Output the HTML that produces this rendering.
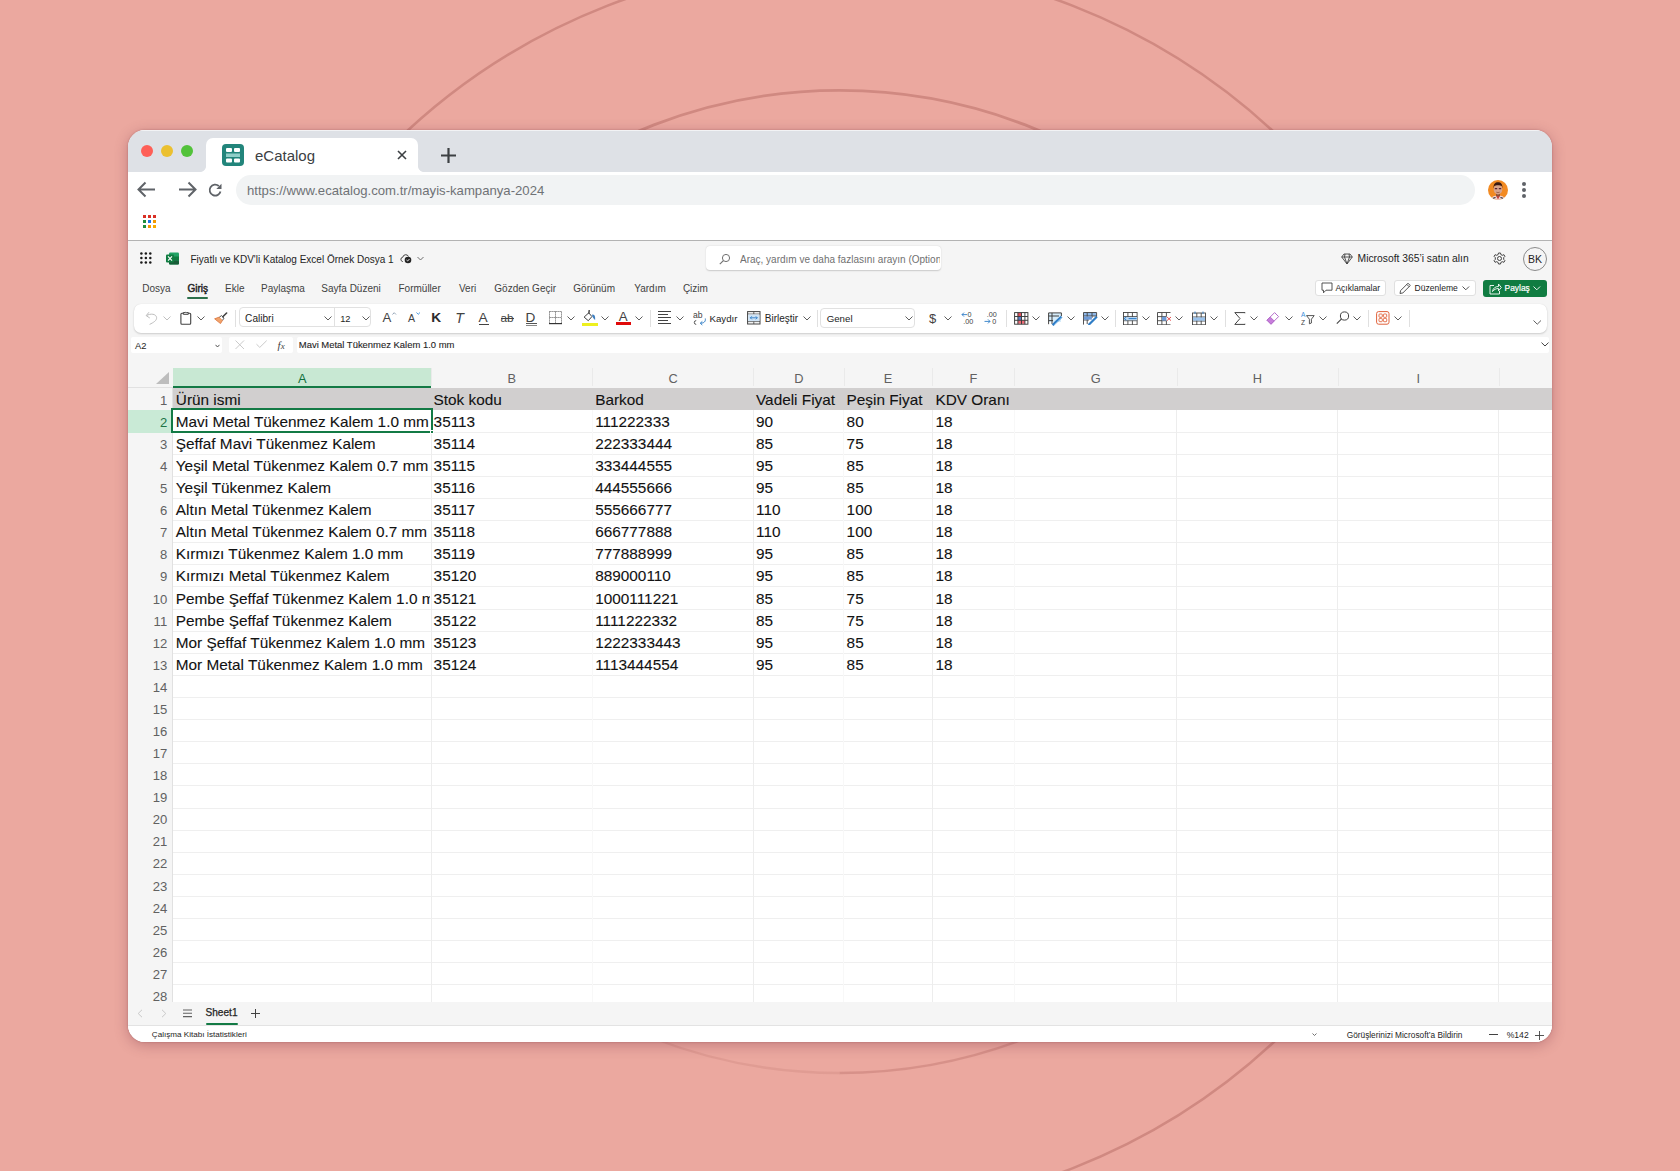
<!DOCTYPE html>
<html><head><meta charset="utf-8">
<style>
*{margin:0;padding:0;box-sizing:border-box}
html,body{width:1680px;height:1171px;overflow:hidden}
body{background:#EBA89F;font-family:"Liberation Sans",sans-serif;position:relative}
.abs{position:absolute}
#bg{position:absolute;left:0;top:0}
#win{position:absolute;left:128px;top:130px;width:1424px;height:912px;border-radius:17px;overflow:hidden;background:#F5F5F5;box-shadow:0 3px 14px rgba(110,40,60,0.33),0 0 2px rgba(100,40,50,0.35)}
#tabbar{position:absolute;left:0;top:0;width:1424px;height:42px;background:#DEE1E6}
.dot{position:absolute;top:15px;width:12px;height:12px;border-radius:50%}
#tab{position:absolute;left:78px;top:8px;width:212px;height:36px;background:#fff;border-radius:7px 7px 0 0}
.flare{position:absolute;top:36px;width:6px;height:6px}
#toolbar{position:absolute;left:0;top:42px;width:1424px;height:68px;background:#fff}
#sep{position:absolute;left:0;top:110px;width:1424px;height:1px;background:#B3B3B3}
#url{position:absolute;left:108px;top:3px;width:1239px;height:30px;border-radius:15px;background:#F1F3F4}
.t10{font-size:10px;white-space:nowrap;line-height:12px}
.btn{background:#fff;border:1px solid #E0E0E0;border-radius:3px}
</style></head>
<body>
<svg id="bg" width="1680" height="1171">
<path d="M840 1212 A633 625 0 1 0 207 587" fill="none" stroke="#D08981" stroke-width="2.6"/>
<path d="M335.1 581.7 A504.5 491.3 0 0 1 1344.1 581.7" fill="none" stroke="#D08981" stroke-width="2.8"/>
<path d="M1344.1 581.7 A504.5 491.3 0 0 1 839.6 1073" fill="none" stroke="#D08981" stroke-width="2.4" opacity="0.75"/>
<path d="M839.6 1073 A504.5 491.3 0 0 1 335.1 581.7" fill="none" stroke="#D08981" stroke-width="2.4" opacity="0.4"/>
</svg>
<div id="win">
 <div id="tabbar">
  <div id="tophl" class="abs" style="left:0;top:0;width:1424px;height:1px;background:rgba(255,255,255,0.6)"></div>
  <div class="dot" style="left:13px;background:#FE5F57"></div>
  <div class="dot" style="left:33px;background:#EBC030"></div>
  <div class="dot" style="left:53px;background:#52C23A"></div>
  <div class="flare" style="left:72px;background:radial-gradient(circle at 0 0,#DEE1E6 5.6px,#fff 6.4px)"></div><div class="flare" style="left:290px;background:radial-gradient(circle at 100% 0,#DEE1E6 5.6px,#fff 6.4px)"></div>
  <div id="tab">
   <svg class="abs" style="left:16px;top:6px" width="22" height="22" viewBox="0 0 22 22">
    <rect x="0" y="0" width="22" height="22" rx="4" fill="#22857B"/>
    <rect x="4" y="4" width="6" height="4" rx="1" fill="#fff"/><rect x="12" y="4" width="6" height="4" rx="1" fill="#fff"/>
    <rect x="4" y="9.5" width="14" height="3.5" fill="#8FCFC8"/>
    <rect x="4" y="14.5" width="6" height="4" rx="1" fill="#fff"/><rect x="12" y="14.5" width="6" height="4" rx="1" fill="#fff"/>
   </svg>
   <div class="abs" style="left:49px;top:9px;font-size:15px;color:#3C4043">eCatalog</div>
   <svg class="abs" style="left:191px;top:12px" width="10" height="10" viewBox="0 0 10 10"><path d="M1 1L9 9M9 1L1 9" stroke="#3C4043" stroke-width="1.6"/></svg>
  </div>
  <svg class="abs" style="left:312px;top:17px" width="17" height="17" viewBox="0 0 17 17"><path d="M8.5 1V16M1 8.5H16" stroke="#3C4043" stroke-width="2.2"/></svg>
 </div>
 <div id="toolbar">
  <svg class="abs" style="left:9px;top:9px" width="19" height="17" viewBox="0 0 19 17"><path d="M18 8.5H2M8.5 1.5L1.5 8.5L8.5 15.5" fill="none" stroke="#5F6368" stroke-width="2"/></svg>
  <svg class="abs" style="left:50px;top:9px" width="19" height="17" viewBox="0 0 19 17"><path d="M1 8.5H17M10.5 1.5L17.5 8.5L10.5 15.5" fill="none" stroke="#5F6368" stroke-width="2"/></svg>
  <svg class="abs" style="left:80px;top:11px" width="15" height="15" viewBox="0 0 15 15"><path d="M12.5 8.5A5.5 5.5 0 1 1 10.8 3" fill="none" stroke="#5F6368" stroke-width="1.8"/><path d="M13.5 0.8V6H8.3Z" fill="#5F6368"/></svg>
  <div id="url"><div class="abs" style="left:11px;top:8px;font-size:13.15px;color:#6F7276">https://www.ecatalog.com.tr/mayis-kampanya-2024</div></div>
  <svg class="abs" style="left:1360px;top:7.8px" width="20" height="20" viewBox="0 0 20 20"><defs><clipPath id="av"><circle cx="10" cy="10" r="10"/></clipPath></defs><g clip-path="url(#av)"><rect width="20" height="20" fill="#F28A22"/><path d="M3 21C3 16.5 6 15.6 10 15.6C14 15.6 17 16.5 17 21Z" fill="#F2D2CF"/><path d="M8 15.8L10 19.5L12 15.8Z" fill="#C8453C"/><path d="M4.5 18.5L7.5 17.5M15.5 18.5L12.5 17.5" stroke="#2A2A2A" stroke-width="1.2"/><rect x="8" y="12" width="4" height="4.2" fill="#8E5034"/><ellipse cx="10" cy="9.4" rx="4.3" ry="5" fill="#D8A48C"/><path d="M5.6 8.6C5.2 4 7.2 2.3 10 2.3C12.8 2.3 14.8 4 14.4 8.6L13.8 6C12.4 5 7.6 5 6.2 6Z" fill="#3A1A12"/><path d="M6.8 8.6H9.2M10.8 8.6H13.2" stroke="#5A2230" stroke-width="1.1"/><path d="M8.3 12.2Q10 13 11.7 12.2" stroke="#7A3A2A" stroke-width="0.6" fill="none"/></g></svg>
  <div class="abs" style="left:1394px;top:9.6px;width:4px;height:4px;border-radius:50%;background:#5F6368"></div>
  <div class="abs" style="left:1394px;top:16px;width:4px;height:4px;border-radius:50%;background:#5F6368"></div>
  <div class="abs" style="left:1394px;top:22.4px;width:4px;height:4px;border-radius:50%;background:#5F6368"></div>
  <svg class="abs" style="left:15px;top:43px" width="14" height="14" viewBox="0 0 14 14">
   <rect x="0" y="0" width="3" height="3" fill="#D93025"/><rect x="5" y="0" width="3" height="3" fill="#D93025"/><rect x="10" y="0" width="3" height="3" fill="#D93025"/>
   <rect x="0" y="5" width="3" height="3" fill="#1E8E3E"/><rect x="5" y="5" width="3" height="3" fill="#1A73E8"/><rect x="10" y="5" width="3" height="3" fill="#F29900"/>
   <rect x="0" y="10" width="3" height="3" fill="#1E8E3E"/><rect x="5" y="10" width="3" height="3" fill="#F29900"/><rect x="10" y="10" width="3" height="3" fill="#F9AB00"/>
  </svg>
 </div>
 <div id="sep"></div>

 <div id="xl" class="abs" style="left:0;top:111px;width:1424px;height:801px;background:#F5F5F5"></div>
 <!-- title row -->
 <svg class="abs" style="left:12px;top:122px" width="13" height="13" viewBox="0 0 13 13" fill="#1A1A1A"><circle cx="1.40" cy="1.50" r="1.25"/><circle cx="5.85" cy="1.50" r="1.25"/><circle cx="10.30" cy="1.50" r="1.25"/><circle cx="1.40" cy="5.95" r="1.25"/><circle cx="5.85" cy="5.95" r="1.25"/><circle cx="10.30" cy="5.95" r="1.25"/><circle cx="1.40" cy="10.40" r="1.25"/><circle cx="5.85" cy="10.40" r="1.25"/><circle cx="10.30" cy="10.40" r="1.25"/></svg>
 <svg class="abs" style="left:38px;top:122px" width="13" height="13" viewBox="0 0 13 13">
  <rect x="3" y="0.5" width="10" height="12" rx="1.2" fill="#21A366"/>
  <rect x="3" y="4.5" width="10" height="4" fill="#107C41"/>
  <rect x="3" y="8.5" width="10" height="4" rx="1" fill="#185C37"/>
  <rect x="0" y="2.5" width="8" height="8" rx="1" fill="#107C41"/>
  <path d="M2 4.3L6 8.7M6 4.3L2 8.7" stroke="#fff" stroke-width="1.1"/>
 </svg>
 <div class="abs t10" style="left:62.5px;top:124px;color:#242424">Fiyatlı ve KDV'li Katalog Excel Örnek Dosya 1</div>
 <svg class="abs" style="left:272px;top:123px" width="12" height="11" viewBox="0 0 12 11"><path d="M3 8.5H2.5A2.2 2.2 0 0 1 2.8 4.2A3 3 0 0 1 8.5 3.5" fill="none" stroke="#424242" stroke-width="1"/><circle cx="8" cy="7" r="3.3" fill="#242424"/><path d="M6.5 7L7.6 8L9.5 6" fill="none" stroke="#fff" stroke-width="0.9"/></svg>
 <svg class="abs" style="left:289px;top:126px" width="7" height="5" viewBox="0 0 7 5"><path d="M0.5 1L3.5 4L6.5 1" fill="none" stroke="#616161" stroke-width="0.9"/></svg>
 <div class="abs" style="left:578px;top:116px;width:235px;height:24px;background:#fff;border-radius:4px;box-shadow:0 0.5px 1.5px rgba(0,0,0,0.18)"></div>
 <svg class="abs" style="left:591px;top:123px" width="12" height="12" viewBox="0 0 12 12"><circle cx="7" cy="5" r="3.6" fill="none" stroke="#707070" stroke-width="1"/><path d="M4.4 7.6L0.8 11.2" stroke="#707070" stroke-width="1.1"/></svg>
 <div class="abs t10" style="left:612px;top:124px;color:#707070;width:200px;overflow:hidden;white-space:nowrap">Araç, yardım ve daha fazlasını arayın (Option + Q)</div>
 <svg class="abs" style="left:1213px;top:123px" width="12" height="12" viewBox="0 0 12 12"><path d="M3 1H9L11.3 4L6 11L0.7 4Z M0.7 4H11.3 M4 1L3.5 4L6 11L8.5 4L8 1" fill="none" stroke="#424242" stroke-width="0.9" stroke-linejoin="round"/></svg>
 <div class="abs t10" style="left:1229.6px;top:123px;color:#242424;font-size:10.3px">Microsoft 365’i satın alın</div>
 <svg class="abs" style="left:1365px;top:122px" width="13" height="13" viewBox="0 0 13 13"><g fill="none" stroke="#424242" stroke-width="1"><circle cx="6.5" cy="6.5" r="2"/><path d="M5.5 1H7.5L7.9 2.6L9.3 3.3L10.9 2.7L11.9 4.4L10.7 5.6V7.4L11.9 8.6L10.9 10.3L9.3 9.7L7.9 10.4L7.5 12H5.5L5.1 10.4L3.7 9.7L2.1 10.3L1.1 8.6L2.3 7.4V5.6L1.1 4.4L2.1 2.7L3.7 3.3L5.1 2.6Z" stroke-linejoin="round"/></g></svg>
 <div class="abs" style="left:1395px;top:116.5px;width:24px;height:24px;border-radius:50%;border:1px solid #8A8A8A;background:transparent;font-size:10.5px;color:#242424;text-align:center;line-height:22px">BK</div>
 <!-- tabs -->
 <div class="abs t10" style="left:14.3px;top:153px;color:#424242">Dosya</div>
 <div class="abs t10" style="left:59.4px;top:153px;color:#242424;font-size:10px;-webkit-text-stroke:0.45px #242424">Giriş</div>
 <div class="abs" style="left:59px;top:167px;width:21px;height:2px;border-radius:1px;background:#2B6F4A"></div>
 <div class="abs t10" style="left:97px;top:153px;color:#424242">Ekle</div>
 <div class="abs t10" style="left:133px;top:153px;color:#424242">Paylaşma</div>
 <div class="abs t10" style="left:193.3px;top:153px;color:#424242">Sayfa Düzeni</div>
 <div class="abs t10" style="left:270.5px;top:153px;color:#424242">Formüller</div>
 <div class="abs t10" style="left:331px;top:153px;color:#424242">Veri</div>
 <div class="abs t10" style="left:366.3px;top:153px;color:#424242">Gözden Geçir</div>
 <div class="abs t10" style="left:445.3px;top:153px;color:#424242">Görünüm</div>
 <div class="abs t10" style="left:506.3px;top:153px;color:#424242">Yardım</div>
 <div class="abs t10" style="left:554.9px;top:153px;color:#424242">Çizim</div>
 <!-- right buttons -->
 <div class="abs btn" style="left:1186.7px;top:149.5px;width:71.2px;height:16.5px"></div>
 <div class="abs btn" style="left:1265.7px;top:149.5px;width:82.5px;height:16.5px"></div>
 <div class="abs" style="left:1354.7px;top:149.5px;width:64.2px;height:17.5px;background:#107C41;border-radius:3px"></div>
<!--RIBBON-->
<div class="abs" style="left:5.70px;top:173.60px;width:1413px;height:29px;background:#fff;border-radius:7px;box-shadow:0 1px 2px rgba(0,0,0,0.16),0 0 1px rgba(0,0,0,0.10)"></div>
<div class="abs" style="left:107.40px;top:179.50px;width:1px;height:17px;background:#E0E0E0"></div>
<div class="abs" style="left:521.50px;top:179.50px;width:1px;height:17px;background:#E0E0E0"></div>
<div class="abs" style="left:688.60px;top:179.50px;width:1px;height:17px;background:#E0E0E0"></div>
<div class="abs" style="left:877.70px;top:179.50px;width:1px;height:17px;background:#E0E0E0"></div>
<div class="abs" style="left:987.20px;top:179.50px;width:1px;height:17px;background:#E0E0E0"></div>
<div class="abs" style="left:1096.80px;top:179.50px;width:1px;height:17px;background:#E0E0E0"></div>
<div class="abs" style="left:1239.50px;top:179.50px;width:1px;height:17px;background:#E0E0E0"></div>
<div class="abs" style="left:1280.50px;top:179.50px;width:1px;height:17px;background:#E0E0E0"></div>
<svg class="abs" style="left:17.00px;top:181.00px" width="13" height="14" viewBox="0 0 13 14"><path d="M4 1.2L1.2 4.6L4.8 7" fill="none" stroke="#BDBDBD" stroke-width="1"/><path d="M1.5 4.6C5.5 2.2 11.2 2.8 11.6 6.6C11.9 9.5 8.5 11.5 4.6 13.4" fill="none" stroke="#BDBDBD" stroke-width="1"/></svg>
<svg class="abs" style="left:35.00px;top:186.20px" width="8" height="5" viewBox="0 0 8 5"><path d="M0.5 0.5L4.0 4L7.5 0.5" fill="none" stroke="#BDBDBD" stroke-width="0.95"/></svg>
<svg class="abs" style="left:52.00px;top:181.00px" width="12" height="14" viewBox="0 0 12 14"><rect x="0.9" y="2.3" width="9.8" height="10.9" rx="1" fill="none" stroke="#424242" stroke-width="1.1"/><path d="M3.3 3.3V1.6H5.2A0.8 0.8 0 0 1 6.4 1.6H8.3V3.3Z" fill="#fff" stroke="#424242" stroke-width="1"/></svg>
<svg class="abs" style="left:69.00px;top:186.20px" width="8" height="5" viewBox="0 0 8 5"><path d="M0.5 0.5L4.0 4L7.5 0.5" fill="none" stroke="#555555" stroke-width="0.95"/></svg>
<svg class="abs" style="left:85.50px;top:181.50px" width="14" height="12" viewBox="0 0 14 12"><path d="M0.6 6.8L5.5 5L8.6 8.2L6.5 11.6Z" fill="#F2A36B" stroke="#D9713A" stroke-width="0.8"/><path d="M5.5 5L7.6 3.6L10 6.1L8.6 8.2" fill="#fff" stroke="#424242" stroke-width="0.9"/><path d="M8.8 4.8L12.6 1" stroke="#424242" stroke-width="1.6" stroke-linecap="round"/></svg>
<div class="abs" style="left:110.80px;top:177.30px;width:132.5px;height:20px;border:1px solid #E1E1E1;border-radius:4px;background:#fff"></div>
<div class="abs" style="left:205.50px;top:177.80px;width:1px;height:19px;background:#E1E1E1"></div>
<div class="abs" style="left:117.10px;top:183px;font-size:10.1px;line-height:11px;color:#242424;white-space:nowrap;">Calibri</div>
<svg class="abs" style="left:196.00px;top:186.20px" width="8" height="5" viewBox="0 0 8 5"><path d="M0.5 0.5L4.0 4L7.5 0.5" fill="none" stroke="#555555" stroke-width="0.95"/></svg>
<div class="abs" style="left:212.20px;top:184px;font-size:9.3px;line-height:10px;color:#242424;white-space:nowrap;">12</div>
<svg class="abs" style="left:233.60px;top:186.20px" width="8" height="5" viewBox="0 0 8 5"><path d="M0.5 0.5L4.0 4L7.5 0.5" fill="none" stroke="#555555" stroke-width="0.95"/></svg>
<div class="abs" style="left:254.60px;top:180px;font-size:13.2px;line-height:15px;color:#424242;white-space:nowrap;">A</div>
<svg class="abs" style="left:264.20px;top:181.60px" width="5" height="3" viewBox="0 0 5 3"><path d="M0.5 2.5L2.2 0.7L4 2.5" fill="none" stroke="#7A8EA3" stroke-width="0.8"/></svg>
<div class="abs" style="left:280.00px;top:182px;font-size:10.6px;line-height:12px;color:#424242;white-space:nowrap;">A</div>
<svg class="abs" style="left:287.60px;top:182.00px" width="5" height="3" viewBox="0 0 5 3"><path d="M0.5 0.5L2.2 2.3L4 0.5" fill="none" stroke="#3B8FD9" stroke-width="0.9"/></svg>
<div class="abs" style="left:303.30px;top:180px;font-size:13.7px;line-height:15px;color:#2B2B2B;white-space:nowrap;font-weight:bold">K</div>
<div class="abs" style="left:327.20px;top:180px;font-size:14.2px;line-height:16px;color:#424242;white-space:nowrap;font-style:italic">T</div>
<div class="abs" style="left:350.50px;top:180px;font-size:13.7px;line-height:15px;color:#424242;white-space:nowrap;">A</div>
<div class="abs" style="left:351.00px;top:193.80px;width:10px;height:1px;background:#424242"></div>
<div class="abs" style="left:372.50px;top:181px;font-size:11.8px;line-height:14px;color:#424242;white-space:nowrap;">ab</div>
<div class="abs" style="left:372.50px;top:188.40px;width:13.5px;height:1px;background:#424242"></div>
<div class="abs" style="left:397.60px;top:180px;font-size:13.6px;line-height:15px;color:#424242;white-space:nowrap;">D</div>
<div class="abs" style="left:398.20px;top:193.30px;width:10.5px;height:1px;background:#555"></div>
<div class="abs" style="left:398.20px;top:195.00px;width:10.5px;height:1px;background:#888"></div>
<svg class="abs" style="left:421.00px;top:181.00px" width="13" height="14" viewBox="0 0 13 14"><g stroke="#6E6E6E" stroke-width="1" fill="none" stroke-dasharray="1.2 0.8"><path d="M0.5 0.5H12.5M0.5 0.5V12M12.5 0.5V12M6.5 0.5V12M0.5 6.5H12.5"/></g><path d="M0 12.6H13" stroke="#333" stroke-width="1.2"/></svg>
<svg class="abs" style="left:438.70px;top:186.20px" width="8" height="5" viewBox="0 0 8 5"><path d="M0.5 0.5L4.0 4L7.5 0.5" fill="none" stroke="#555555" stroke-width="0.95"/></svg>
<svg class="abs" style="left:455.00px;top:180.00px" width="14" height="12.5" viewBox="0 0 14 12.5"><path d="M1.1 7.1L5.8 2.8L8.9 6.6L5.3 10.7Z" fill="none" stroke="#424242" stroke-width="1" stroke-linejoin="round"/><path d="M5.9 3.2L6.2 0.6" stroke="#555" stroke-width="1.6" stroke-linecap="round"/><path d="M9.2 4.6C10.8 4.2 12 5.6 12.1 7.6L12.1 10C11 9.2 9.8 7.6 9.2 6Z" fill="#3F7FC0"/></svg>
<div class="abs" style="left:454.00px;top:192.60px;width:15.6px;height:3px;background:#EEF01E"></div>
<svg class="abs" style="left:472.50px;top:186.20px" width="8" height="5" viewBox="0 0 8 5"><path d="M0.5 0.5L4.0 4L7.5 0.5" fill="none" stroke="#555555" stroke-width="0.95"/></svg>
<div class="abs" style="left:490.80px;top:179px;font-size:13.3px;line-height:15px;color:#424242;white-space:nowrap;">A</div>
<div class="abs" style="left:488.00px;top:191.90px;width:15.1px;height:3.2px;background:#E00A0A"></div>
<svg class="abs" style="left:507.00px;top:186.20px" width="8" height="5" viewBox="0 0 8 5"><path d="M0.5 0.5L4.0 4L7.5 0.5" fill="none" stroke="#555555" stroke-width="0.95"/></svg>
<svg class="abs" style="left:530.00px;top:181.00px" width="14" height="14" viewBox="0 0 14 14"><g stroke="#424242" stroke-width="1"><path d="M0 0.5H13M0 3.5H10M0 6.5H13M0 9.5H10M0 12.5H13"/></g></svg>
<svg class="abs" style="left:547.70px;top:186.20px" width="8" height="5" viewBox="0 0 8 5"><path d="M0.5 0.5L4.0 4L7.5 0.5" fill="none" stroke="#555555" stroke-width="0.95"/></svg>
<svg class="abs" style="left:564.50px;top:181.00px" width="14" height="15" viewBox="0 0 14 15"><text x="0" y="7.2" font-size="8.6" font-family="Liberation Sans" fill="#424242">ab</text><path d="M3.2 9.6A1.9 1.9 0 0 0 3.2 13.4" fill="none" stroke="#424242" stroke-width="0.9"/><path d="M12.3 7.5C12.8 10.5 11 12.2 7.5 12.2M9.3 10.4L7.3 12.2L9.3 14" fill="none" stroke="#2F7DC6" stroke-width="1"/></svg>
<div class="abs" style="left:581.50px;top:183px;font-size:9.7px;line-height:11px;color:#242424;white-space:nowrap;">Kaydır</div>
<svg class="abs" style="left:619.00px;top:181.00px" width="14" height="14" viewBox="0 0 14 14"><rect x="0.6" y="0.6" width="12.4" height="12.4" fill="none" stroke="#424242" stroke-width="1"/><path d="M0.6 3H13M0.6 10.6H13" stroke="#424242" stroke-width="0.8"/><rect x="1.2" y="3.5" width="11.2" height="6.6" fill="#CFE4F7"/><path d="M3.3 6.8H10.3M4.8 5.3L3.3 6.8L4.8 8.3M8.8 5.3L10.3 6.8L8.8 8.3" fill="none" stroke="#2F7DC6" stroke-width="0.9"/><path d="M6.8 0.6V3M6.8 10.6V13" stroke="#424242" stroke-width="0.8"/></svg>
<div class="abs" style="left:636.80px;top:183px;font-size:10px;line-height:11px;color:#242424;white-space:nowrap;">Birleştir</div>
<svg class="abs" style="left:674.90px;top:186.20px" width="8" height="5" viewBox="0 0 8 5"><path d="M0.5 0.5L4.0 4L7.5 0.5" fill="none" stroke="#555555" stroke-width="0.95"/></svg>
<div class="abs" style="left:692.40px;top:177.60px;width:94.5px;height:20px;border:1px solid #E1E1E1;border-radius:4px;background:#fff"></div>
<div class="abs" style="left:698.70px;top:183px;font-size:9.7px;line-height:11px;color:#242424;white-space:nowrap;">Genel</div>
<svg class="abs" style="left:777.20px;top:186.20px" width="8" height="5" viewBox="0 0 8 5"><path d="M0.5 0.5L4.0 4L7.5 0.5" fill="none" stroke="#555555" stroke-width="0.95"/></svg>
<div class="abs" style="left:801.00px;top:181px;font-size:13px;line-height:15px;color:#424242;white-space:nowrap;">$</div>
<svg class="abs" style="left:815.80px;top:186.20px" width="8" height="5" viewBox="0 0 8 5"><path d="M0.5 0.5L4.0 4L7.5 0.5" fill="none" stroke="#555555" stroke-width="0.95"/></svg>
<svg class="abs" style="left:832.50px;top:181.00px" width="15" height="14.5" viewBox="0 0 15 14.5"><text x="6.5" y="6.4" font-size="7.2" font-family="Liberation Sans" fill="#424242">0</text><text x="2.2" y="13.2" font-size="7.2" font-family="Liberation Sans" fill="#424242">.00</text><path d="M1 3.6H6.2M3 1.6L1 3.6L3 5.6" fill="none" stroke="#2F7DC6" stroke-width="0.9"/></svg>
<svg class="abs" style="left:855.50px;top:181.00px" width="15" height="14.5" viewBox="0 0 15 14.5"><text x="2.8" y="6.4" font-size="7.2" font-family="Liberation Sans" fill="#424242">.00</text><text x="8.2" y="13.2" font-size="7.2" font-family="Liberation Sans" fill="#424242">0</text><path d="M0.5 10.4H6M4 8.4L6 10.4L4 12.4" fill="none" stroke="#2F7DC6" stroke-width="0.9"/></svg>
<svg class="abs" style="left:886.00px;top:181.50px" width="14.5" height="13" viewBox="0 0 14.5 13"><rect x="3.9" y="1" width="3.6" height="3.4" fill="#E8505B"/><rect x="3.9" y="8.4" width="7" height="3.4" fill="#F06A76"/><rect x="3.9" y="4.6" width="3.6" height="3.6" fill="#5A7FC8"/><g fill="none" stroke="#3A3A3A" stroke-width="0.95"><rect x="0.6" y="0.6" width="13.3" height="11.6"/><path d="M3.9 0.6V12.2M7.5 0.6V12.2M10.9 0.6V12.2M0.6 4.5H13.9M0.6 8.3H13.9"/></g></svg>
<svg class="abs" style="left:904.00px;top:186.20px" width="8" height="5" viewBox="0 0 8 5"><path d="M0.5 0.5L4.0 4L7.5 0.5" fill="none" stroke="#555555" stroke-width="0.95"/></svg>
<svg class="abs" style="left:920.30px;top:181.50px" width="15" height="14" viewBox="0 0 15 14"><rect x="1" y="1" width="12" height="9" fill="#D6ECFA"/><g fill="none" stroke="#3A3A3A" stroke-width="0.95"><path d="M0.6 12.2V0.9H13.4V4"/><path d="M0.6 4H11M0.6 8.6H5M4 0.9V12"/></g><path d="M4.6 13.2L13.6 4.6" stroke="#2F7DC6" stroke-width="2.4"/><path d="M6.4 12.6L13.8 5.4" stroke="#8CC4F0" stroke-width="0.7"/></svg>
<svg class="abs" style="left:938.70px;top:186.20px" width="8" height="5" viewBox="0 0 8 5"><path d="M0.5 0.5L4.0 4L7.5 0.5" fill="none" stroke="#555555" stroke-width="0.95"/></svg>
<svg class="abs" style="left:954.60px;top:181.50px" width="15" height="13.5" viewBox="0 0 15 13.5"><rect x="0.5" y="0.5" width="13" height="3.5" fill="#8FB8E8"/><g fill="none" stroke="#424242" stroke-width="0.9"><path d="M13.6 0.5H0.5V12.6M0.5 4H13.6M0.5 8H6M4.2 0.5V12M9 0.5V6M13.6 0.5V6"/></g><rect x="0.9" y="4.4" width="8" height="3.3" fill="#6E9BD8"/><path d="M5.5 13L13.8 4.8" stroke="#2F7DC6" stroke-width="2.2"/></svg>
<svg class="abs" style="left:973.00px;top:186.20px" width="8" height="5" viewBox="0 0 8 5"><path d="M0.5 0.5L4.0 4L7.5 0.5" fill="none" stroke="#555555" stroke-width="0.95"/></svg>
<svg class="abs" style="left:995.00px;top:181.50px" width="15" height="13.5" viewBox="0 0 15 13.5"><g fill="none" stroke="#424242" stroke-width="0.9"><rect x="0.5" y="0.5" width="13.6" height="12.3"/><path d="M4.9 0.5V12.8M9.4 0.5V12.8M0.5 4.6H14.1M0.5 8.7H14.1"/></g><rect x="1" y="5" width="13" height="3.3" fill="#B9D6F2"/><path d="M5.6 6.6H13.6M3.4 5L1.2 6.6L3.4 8.2" fill="none" stroke="#2F7DC6" stroke-width="1"/></svg>
<svg class="abs" style="left:1013.90px;top:186.20px" width="8" height="5" viewBox="0 0 8 5"><path d="M0.5 0.5L4.0 4L7.5 0.5" fill="none" stroke="#555555" stroke-width="0.95"/></svg>
<svg class="abs" style="left:1029.40px;top:181.50px" width="15" height="13.5" viewBox="0 0 15 13.5"><g fill="none" stroke="#424242" stroke-width="0.9"><path d="M13.5 0.5H0.5V12.8H13.5M4.9 0.5V12.8M9.4 0.5V4.6M9.4 8.7V12.8M0.5 4.6H9.4M0.5 8.7H9.4"/></g><rect x="5" y="4.8" width="4.4" height="3.8" fill="#6E9BD8"/><path d="M10 5L14 8.6M14 5L10 8.6" stroke="#E23B3B" stroke-width="0.9"/></svg>
<svg class="abs" style="left:1047.20px;top:186.20px" width="8" height="5" viewBox="0 0 8 5"><path d="M0.5 0.5L4.0 4L7.5 0.5" fill="none" stroke="#555555" stroke-width="0.95"/></svg>
<svg class="abs" style="left:1063.70px;top:180.50px" width="14" height="14.5" viewBox="0 0 14 14.5"><g fill="none" stroke="#424242" stroke-width="0.9"><rect x="0.5" y="2" width="13" height="11.8"/><path d="M4.8 2V13.8M9.2 2V13.8M0.5 6H13.5M0.5 10H13.5"/></g><rect x="1" y="6.4" width="12" height="3.3" fill="#9CC3EC"/><path d="M3 0.5V3M11 0.5V3" stroke="#2F7DC6" stroke-width="0.9"/></svg>
<svg class="abs" style="left:1081.50px;top:186.20px" width="8" height="5" viewBox="0 0 8 5"><path d="M0.5 0.5L4.0 4L7.5 0.5" fill="none" stroke="#555555" stroke-width="0.95"/></svg>
<svg class="abs" style="left:1105.50px;top:181.50px" width="12" height="13" viewBox="0 0 12 13"><path d="M11 1.2V0.6H0.8L6 6.5L0.8 12.4H11V11.8" fill="none" stroke="#424242" stroke-width="1"/></svg>
<svg class="abs" style="left:1121.90px;top:186.20px" width="8" height="5" viewBox="0 0 8 5"><path d="M0.5 0.5L4.0 4L7.5 0.5" fill="none" stroke="#555555" stroke-width="0.95"/></svg>
<svg class="abs" style="left:1138.40px;top:181.00px" width="14" height="14" viewBox="0 0 14 14"><path d="M1 9.2L8.6 1.6L12.6 5.6L5 13.2Z" fill="#fff" stroke="#B36CC9" stroke-width="1"/><path d="M1 9.2L4.2 6L8.2 10L5 13.2Z" fill="#C77DDB" stroke="#B36CC9" stroke-width="1"/></svg>
<svg class="abs" style="left:1156.80px;top:186.20px" width="8" height="5" viewBox="0 0 8 5"><path d="M0.5 0.5L4.0 4L7.5 0.5" fill="none" stroke="#555555" stroke-width="0.95"/></svg>
<svg class="abs" style="left:1173.30px;top:181.00px" width="14" height="14" viewBox="0 0 14 14"><text x="0" y="6" font-size="6.6" font-family="Liberation Sans" fill="#3B8FD9">A</text><text x="0" y="13.6" font-size="6.6" font-family="Liberation Sans" fill="#424242">Z</text><path d="M5.5 4.6H13.2L10.4 8.2V12L8.4 12.8V8.2Z" fill="none" stroke="#424242" stroke-width="0.9" stroke-linejoin="round"/></svg>
<svg class="abs" style="left:1190.90px;top:186.20px" width="8" height="5" viewBox="0 0 8 5"><path d="M0.5 0.5L4.0 4L7.5 0.5" fill="none" stroke="#555555" stroke-width="0.95"/></svg>
<svg class="abs" style="left:1207.50px;top:181.00px" width="14" height="14" viewBox="0 0 14 14"><circle cx="8.5" cy="5" r="4.1" fill="none" stroke="#424242" stroke-width="1"/><path d="M5.6 7.9L0.8 12.7" stroke="#424242" stroke-width="1.1"/></svg>
<svg class="abs" style="left:1225.00px;top:186.20px" width="8" height="5" viewBox="0 0 8 5"><path d="M0.5 0.5L4.0 4L7.5 0.5" fill="none" stroke="#555555" stroke-width="0.95"/></svg>
<svg class="abs" style="left:1247.70px;top:181.00px" width="14" height="14" viewBox="0 0 14 14"><rect x="0.6" y="0.6" width="12.4" height="12.6" rx="2" fill="none" stroke="#E0623A" stroke-width="1"/><g fill="none" stroke="#E0623A" stroke-width="0.9"><rect x="3" y="3" width="3.3" height="3.3" rx="0.8"/><rect x="7.4" y="3" width="3.3" height="3.3" rx="0.8"/><rect x="3" y="7.4" width="3.3" height="3.3" rx="0.8"/><rect x="7.4" y="7.4" width="3.3" height="3.3" rx="0.8"/></g></svg>
<svg class="abs" style="left:1265.70px;top:186.20px" width="8" height="5" viewBox="0 0 8 5"><path d="M0.5 0.5L4.0 4L7.5 0.5" fill="none" stroke="#555555" stroke-width="0.95"/></svg>
<svg class="abs" style="left:1404.70px;top:190.40px" width="8.5" height="5.2" viewBox="0 0 8.5 5.2"><path d="M0.5 0.5L4.25 4.2L8.0 0.5" fill="none" stroke="#555555" stroke-width="0.95"/></svg>
<!--/RIBBON-->
 <!--GRID-->
<div class="abs" style="left:3.30px;top:207.00px;width:90.7px;height:16.2px;background:#fff;border-radius:2px"></div>
<div class="abs" style="left:6.90px;top:210px;font-size:9.4px;line-height:11px;color:#242424;white-space:nowrap;">A2</div>
<svg class="abs" style="left:86.50px;top:213.50px" width="5" height="4" viewBox="0 0 5 4"><path d="M0.5 0.8L2.5 3L4.5 0.8" fill="none" stroke="#424242" stroke-width="0.9"/></svg>
<div class="abs" style="left:101.20px;top:207.00px;width:63.7px;height:16.2px;background:#fff;border-radius:2px"></div>
<svg class="abs" style="left:107.00px;top:210.20px" width="9.5" height="9.5" viewBox="0 0 9.5 9.5"><path d="M0.5 0.5L9 9M9 0.5L0.5 9" stroke="#C4C4C4" stroke-width="0.9"/></svg>
<svg class="abs" style="left:127.80px;top:210.40px" width="11.2" height="8" viewBox="0 0 11.2 8"><path d="M0.5 4.2L3.8 7.4L10.7 0.6" fill="none" stroke="#C4C4C4" stroke-width="0.9"/></svg>
<div class="abs" style="left:149.60000000000002px;top:208.60000000000002px;font-family:'Liberation Serif',serif;font-style:italic;font-size:11px;line-height:12px;color:#424242">f<span style="font-size:9px">x</span></div>
<div class="abs" style="left:169.00px;top:207.00px;width:1252px;height:16.2px;background:#fff;border-radius:2px"></div>
<div class="abs" style="left:170.80px;top:209px;font-size:9.45px;line-height:11px;color:#1F1F1F;white-space:nowrap;-webkit-text-stroke:0.12px #1F1F1F">Mavi Metal Tükenmez Kalem 1.0 mm</div>
<svg class="abs" style="left:1412.50px;top:211.50px" width="8" height="5" viewBox="0 0 8 5"><path d="M0.5 0.6L4 4L7.5 0.6" fill="none" stroke="#424242" stroke-width="1"/></svg>
<div class="abs" style="left:44.80px;top:258.00px;width:1379.20px;height:614.00px;background:#fff"></div>
<div class="abs" style="left:0.00px;top:256.80px;width:44px;height:615.20px;background:#F5F5F5"></div>
<div class="abs" style="left:44.80px;top:238.30px;width:258.20px;height:18px;background:#C8E8D3"></div>
<div class="abs" style="left:44.80px;top:256.10px;width:258.70px;height:2px;background:#137A45"></div>
<div class="abs" style="left:134.20px;width:80px;text-align:center;top:241px;font-size:12.8px;line-height:15px;color:#0F703D;white-space:nowrap;">A</div>
<div class="abs" style="left:343.80px;width:80px;text-align:center;top:241px;font-size:12.8px;line-height:15px;color:#616161;white-space:nowrap;">B</div>
<div class="abs" style="left:505.00px;width:80px;text-align:center;top:241px;font-size:12.8px;line-height:15px;color:#616161;white-space:nowrap;">C</div>
<div class="abs" style="left:630.75px;width:80px;text-align:center;top:241px;font-size:12.8px;line-height:15px;color:#616161;white-space:nowrap;">D</div>
<div class="abs" style="left:720.05px;width:80px;text-align:center;top:241px;font-size:12.8px;line-height:15px;color:#616161;white-space:nowrap;">E</div>
<div class="abs" style="left:805.30px;width:80px;text-align:center;top:241px;font-size:12.8px;line-height:15px;color:#616161;white-space:nowrap;">F</div>
<div class="abs" style="left:927.65px;width:80px;text-align:center;top:241px;font-size:12.8px;line-height:15px;color:#616161;white-space:nowrap;">G</div>
<div class="abs" style="left:1089.40px;width:80px;text-align:center;top:241px;font-size:12.8px;line-height:15px;color:#616161;white-space:nowrap;">H</div>
<div class="abs" style="left:1250.30px;width:80px;text-align:center;top:241px;font-size:12.8px;line-height:15px;color:#616161;white-space:nowrap;">I</div>
<div class="abs" style="left:303.00px;top:238.30px;width:1px;height:18px;background:#EAEAEA"></div>
<div class="abs" style="left:464.00px;top:238.30px;width:1px;height:18px;background:#EAEAEA"></div>
<div class="abs" style="left:625.40px;top:238.30px;width:1px;height:18px;background:#EAEAEA"></div>
<div class="abs" style="left:715.50px;top:238.30px;width:1px;height:18px;background:#EAEAEA"></div>
<div class="abs" style="left:804.00px;top:238.30px;width:1px;height:18px;background:#EAEAEA"></div>
<div class="abs" style="left:886.00px;top:238.30px;width:1px;height:18px;background:#EAEAEA"></div>
<div class="abs" style="left:1048.70px;top:238.30px;width:1px;height:18px;background:#EAEAEA"></div>
<div class="abs" style="left:1209.50px;top:238.30px;width:1px;height:18px;background:#EAEAEA"></div>
<div class="abs" style="left:1370.50px;top:238.30px;width:1px;height:18px;background:#EAEAEA"></div>
<svg class="abs" style="left:28.00px;top:241.80px" width="13" height="12" viewBox="0 0 13 12"><path d="M13 0V12H0Z" fill="#BDBDBD"/></svg>
<div class="abs" style="left:0.00px;top:256.60px;width:44.8px;height:1px;background:#E1E1E1"></div>
<div class="abs" style="left:44.80px;top:258.00px;width:1379.20px;height:22px;background:#D1CFCF"></div>
<div class="abs" style="left:44.80px;top:301.72px;width:1379.20px;height:1px;background:#EFEFEF"></div>
<div class="abs" style="left:44.80px;top:323.83px;width:1379.20px;height:1px;background:#EFEFEF"></div>
<div class="abs" style="left:44.80px;top:345.94px;width:1379.20px;height:1px;background:#EFEFEF"></div>
<div class="abs" style="left:44.80px;top:368.05px;width:1379.20px;height:1px;background:#EFEFEF"></div>
<div class="abs" style="left:44.80px;top:390.16px;width:1379.20px;height:1px;background:#EFEFEF"></div>
<div class="abs" style="left:44.80px;top:412.27px;width:1379.20px;height:1px;background:#EFEFEF"></div>
<div class="abs" style="left:44.80px;top:434.38px;width:1379.20px;height:1px;background:#EFEFEF"></div>
<div class="abs" style="left:44.80px;top:456.49px;width:1379.20px;height:1px;background:#EFEFEF"></div>
<div class="abs" style="left:44.80px;top:478.60px;width:1379.20px;height:1px;background:#EFEFEF"></div>
<div class="abs" style="left:44.80px;top:500.71px;width:1379.20px;height:1px;background:#EFEFEF"></div>
<div class="abs" style="left:44.80px;top:522.82px;width:1379.20px;height:1px;background:#EFEFEF"></div>
<div class="abs" style="left:44.80px;top:544.93px;width:1379.20px;height:1px;background:#EFEFEF"></div>
<div class="abs" style="left:44.80px;top:567.04px;width:1379.20px;height:1px;background:#EFEFEF"></div>
<div class="abs" style="left:44.80px;top:589.15px;width:1379.20px;height:1px;background:#EFEFEF"></div>
<div class="abs" style="left:44.80px;top:611.26px;width:1379.20px;height:1px;background:#EFEFEF"></div>
<div class="abs" style="left:44.80px;top:633.37px;width:1379.20px;height:1px;background:#EFEFEF"></div>
<div class="abs" style="left:44.80px;top:655.48px;width:1379.20px;height:1px;background:#EFEFEF"></div>
<div class="abs" style="left:44.80px;top:677.59px;width:1379.20px;height:1px;background:#EFEFEF"></div>
<div class="abs" style="left:44.80px;top:699.70px;width:1379.20px;height:1px;background:#EFEFEF"></div>
<div class="abs" style="left:44.80px;top:721.81px;width:1379.20px;height:1px;background:#EFEFEF"></div>
<div class="abs" style="left:44.80px;top:743.92px;width:1379.20px;height:1px;background:#EFEFEF"></div>
<div class="abs" style="left:44.80px;top:766.03px;width:1379.20px;height:1px;background:#EFEFEF"></div>
<div class="abs" style="left:44.80px;top:788.14px;width:1379.20px;height:1px;background:#EFEFEF"></div>
<div class="abs" style="left:44.80px;top:810.25px;width:1379.20px;height:1px;background:#EFEFEF"></div>
<div class="abs" style="left:44.80px;top:832.36px;width:1379.20px;height:1px;background:#EFEFEF"></div>
<div class="abs" style="left:44.80px;top:854.47px;width:1379.20px;height:1px;background:#EFEFEF"></div>
<div class="abs" style="left:302.50px;top:280.00px;width:1px;height:592.00px;background:#EDEDED"></div>
<div class="abs" style="left:463.50px;top:280.00px;width:1px;height:592.00px;background:#F8F8F8"></div>
<div class="abs" style="left:624.90px;top:280.00px;width:1px;height:592.00px;background:#EDEDED"></div>
<div class="abs" style="left:715.00px;top:280.00px;width:1px;height:592.00px;background:#F8F8F8"></div>
<div class="abs" style="left:803.50px;top:280.00px;width:1px;height:592.00px;background:#EDEDED"></div>
<div class="abs" style="left:885.50px;top:280.00px;width:1px;height:592.00px;background:#F8F8F8"></div>
<div class="abs" style="left:1048.20px;top:280.00px;width:1px;height:592.00px;background:#EDEDED"></div>
<div class="abs" style="left:1209.00px;top:280.00px;width:1px;height:592.00px;background:#EDEDED"></div>
<div class="abs" style="left:1370.00px;top:280.00px;width:1px;height:592.00px;background:#EDEDED"></div>
<div class="abs" style="left:43.80px;top:256.80px;width:1px;height:615.20px;background:#E1E1E1"></div>
<div class="abs" style="left:0.00px;top:280.11px;width:43.8px;height:22.61px;background:#C9EAD6"></div>
<div class="abs" style="left:-20.80px;width:60px;text-align:right;top:263px;font-size:13.1px;line-height:15px;color:#616161;white-space:nowrap;">1</div>
<div class="abs" style="left:-20.80px;width:60px;text-align:right;top:285px;font-size:13.1px;line-height:15px;color:#217346;white-space:nowrap;">2</div>
<div class="abs" style="left:-20.80px;width:60px;text-align:right;top:307px;font-size:13.1px;line-height:15px;color:#616161;white-space:nowrap;">3</div>
<div class="abs" style="left:-20.80px;width:60px;text-align:right;top:329px;font-size:13.1px;line-height:15px;color:#616161;white-space:nowrap;">4</div>
<div class="abs" style="left:-20.80px;width:60px;text-align:right;top:351px;font-size:13.1px;line-height:15px;color:#616161;white-space:nowrap;">5</div>
<div class="abs" style="left:-20.80px;width:60px;text-align:right;top:373px;font-size:13.1px;line-height:15px;color:#616161;white-space:nowrap;">6</div>
<div class="abs" style="left:-20.80px;width:60px;text-align:right;top:395px;font-size:13.1px;line-height:15px;color:#616161;white-space:nowrap;">7</div>
<div class="abs" style="left:-20.80px;width:60px;text-align:right;top:417px;font-size:13.1px;line-height:15px;color:#616161;white-space:nowrap;">8</div>
<div class="abs" style="left:-20.80px;width:60px;text-align:right;top:439px;font-size:13.1px;line-height:15px;color:#616161;white-space:nowrap;">9</div>
<div class="abs" style="left:-20.80px;width:60px;text-align:right;top:462px;font-size:13.1px;line-height:15px;color:#616161;white-space:nowrap;">10</div>
<div class="abs" style="left:-20.80px;width:60px;text-align:right;top:484px;font-size:13.1px;line-height:15px;color:#616161;white-space:nowrap;">11</div>
<div class="abs" style="left:-20.80px;width:60px;text-align:right;top:506px;font-size:13.1px;line-height:15px;color:#616161;white-space:nowrap;">12</div>
<div class="abs" style="left:-20.80px;width:60px;text-align:right;top:528px;font-size:13.1px;line-height:15px;color:#616161;white-space:nowrap;">13</div>
<div class="abs" style="left:-20.80px;width:60px;text-align:right;top:550px;font-size:13.1px;line-height:15px;color:#616161;white-space:nowrap;">14</div>
<div class="abs" style="left:-20.80px;width:60px;text-align:right;top:572px;font-size:13.1px;line-height:15px;color:#616161;white-space:nowrap;">15</div>
<div class="abs" style="left:-20.80px;width:60px;text-align:right;top:594px;font-size:13.1px;line-height:15px;color:#616161;white-space:nowrap;">16</div>
<div class="abs" style="left:-20.80px;width:60px;text-align:right;top:616px;font-size:13.1px;line-height:15px;color:#616161;white-space:nowrap;">17</div>
<div class="abs" style="left:-20.80px;width:60px;text-align:right;top:638px;font-size:13.1px;line-height:15px;color:#616161;white-space:nowrap;">18</div>
<div class="abs" style="left:-20.80px;width:60px;text-align:right;top:660px;font-size:13.1px;line-height:15px;color:#616161;white-space:nowrap;">19</div>
<div class="abs" style="left:-20.80px;width:60px;text-align:right;top:682px;font-size:13.1px;line-height:15px;color:#616161;white-space:nowrap;">20</div>
<div class="abs" style="left:-20.80px;width:60px;text-align:right;top:704px;font-size:13.1px;line-height:15px;color:#616161;white-space:nowrap;">21</div>
<div class="abs" style="left:-20.80px;width:60px;text-align:right;top:726px;font-size:13.1px;line-height:15px;color:#616161;white-space:nowrap;">22</div>
<div class="abs" style="left:-20.80px;width:60px;text-align:right;top:749px;font-size:13.1px;line-height:15px;color:#616161;white-space:nowrap;">23</div>
<div class="abs" style="left:-20.80px;width:60px;text-align:right;top:771px;font-size:13.1px;line-height:15px;color:#616161;white-space:nowrap;">24</div>
<div class="abs" style="left:-20.80px;width:60px;text-align:right;top:793px;font-size:13.1px;line-height:15px;color:#616161;white-space:nowrap;">25</div>
<div class="abs" style="left:-20.80px;width:60px;text-align:right;top:815px;font-size:13.1px;line-height:15px;color:#616161;white-space:nowrap;">26</div>
<div class="abs" style="left:-20.80px;width:60px;text-align:right;top:837px;font-size:13.1px;line-height:15px;color:#616161;white-space:nowrap;">27</div>
<div class="abs" style="left:-20.80px;width:60px;text-align:right;top:859px;font-size:13.1px;line-height:15px;color:#616161;white-space:nowrap;">28</div>
<div class="abs" style="left:47.80px;top:261px;font-size:15.35px;line-height:17px;color:#121212;white-space:nowrap;-webkit-text-stroke:0.1px #121212">Ürün ismi</div>
<div class="abs" style="left:305.60px;top:261px;font-size:15.35px;line-height:17px;color:#121212;white-space:nowrap;-webkit-text-stroke:0.1px #121212">Stok kodu</div>
<div class="abs" style="left:467.20px;top:261px;font-size:15.35px;line-height:17px;color:#121212;white-space:nowrap;-webkit-text-stroke:0.1px #121212">Barkod</div>
<div class="abs" style="left:628.00px;top:261px;font-size:15.35px;line-height:17px;color:#121212;white-space:nowrap;-webkit-text-stroke:0.1px #121212">Vadeli Fiyat</div>
<div class="abs" style="left:718.60px;top:261px;font-size:15.35px;line-height:17px;color:#121212;white-space:nowrap;-webkit-text-stroke:0.1px #121212">Peşin Fiyat</div>
<div class="abs" style="left:807.50px;top:261px;font-size:15.35px;line-height:17px;color:#121212;white-space:nowrap;-webkit-text-stroke:0.1px #121212">KDV Oranı</div>
<div class="abs" style="left:47.80px;top:283px;font-size:15.35px;line-height:17px;color:#121212;white-space:nowrap;-webkit-text-stroke:0.1px #121212">Mavi Metal Tükenmez Kalem 1.0 mm</div>
<div class="abs" style="left:305.60px;top:283px;font-size:15.35px;line-height:17px;color:#121212;white-space:nowrap;-webkit-text-stroke:0.1px #121212">35113</div>
<div class="abs" style="left:467.20px;top:283px;font-size:15.35px;line-height:17px;color:#121212;white-space:nowrap;-webkit-text-stroke:0.1px #121212">111222333</div>
<div class="abs" style="left:628.00px;top:283px;font-size:15.35px;line-height:17px;color:#121212;white-space:nowrap;-webkit-text-stroke:0.1px #121212">90</div>
<div class="abs" style="left:718.60px;top:283px;font-size:15.35px;line-height:17px;color:#121212;white-space:nowrap;-webkit-text-stroke:0.1px #121212">80</div>
<div class="abs" style="left:807.50px;top:283px;font-size:15.35px;line-height:17px;color:#121212;white-space:nowrap;-webkit-text-stroke:0.1px #121212">18</div>
<div class="abs" style="left:47.80px;top:305px;font-size:15.35px;line-height:17px;color:#121212;white-space:nowrap;-webkit-text-stroke:0.1px #121212">Şeffaf Mavi Tükenmez Kalem</div>
<div class="abs" style="left:305.60px;top:305px;font-size:15.35px;line-height:17px;color:#121212;white-space:nowrap;-webkit-text-stroke:0.1px #121212">35114</div>
<div class="abs" style="left:467.20px;top:305px;font-size:15.35px;line-height:17px;color:#121212;white-space:nowrap;-webkit-text-stroke:0.1px #121212">222333444</div>
<div class="abs" style="left:628.00px;top:305px;font-size:15.35px;line-height:17px;color:#121212;white-space:nowrap;-webkit-text-stroke:0.1px #121212">85</div>
<div class="abs" style="left:718.60px;top:305px;font-size:15.35px;line-height:17px;color:#121212;white-space:nowrap;-webkit-text-stroke:0.1px #121212">75</div>
<div class="abs" style="left:807.50px;top:305px;font-size:15.35px;line-height:17px;color:#121212;white-space:nowrap;-webkit-text-stroke:0.1px #121212">18</div>
<div class="abs" style="left:47.80px;top:327px;font-size:15.35px;line-height:17px;color:#121212;white-space:nowrap;-webkit-text-stroke:0.1px #121212">Yeşil Metal Tükenmez Kalem 0.7 mm</div>
<div class="abs" style="left:305.60px;top:327px;font-size:15.35px;line-height:17px;color:#121212;white-space:nowrap;-webkit-text-stroke:0.1px #121212">35115</div>
<div class="abs" style="left:467.20px;top:327px;font-size:15.35px;line-height:17px;color:#121212;white-space:nowrap;-webkit-text-stroke:0.1px #121212">333444555</div>
<div class="abs" style="left:628.00px;top:327px;font-size:15.35px;line-height:17px;color:#121212;white-space:nowrap;-webkit-text-stroke:0.1px #121212">95</div>
<div class="abs" style="left:718.60px;top:327px;font-size:15.35px;line-height:17px;color:#121212;white-space:nowrap;-webkit-text-stroke:0.1px #121212">85</div>
<div class="abs" style="left:807.50px;top:327px;font-size:15.35px;line-height:17px;color:#121212;white-space:nowrap;-webkit-text-stroke:0.1px #121212">18</div>
<div class="abs" style="left:47.80px;top:349px;font-size:15.35px;line-height:17px;color:#121212;white-space:nowrap;-webkit-text-stroke:0.1px #121212">Yeşil Tükenmez Kalem</div>
<div class="abs" style="left:305.60px;top:349px;font-size:15.35px;line-height:17px;color:#121212;white-space:nowrap;-webkit-text-stroke:0.1px #121212">35116</div>
<div class="abs" style="left:467.20px;top:349px;font-size:15.35px;line-height:17px;color:#121212;white-space:nowrap;-webkit-text-stroke:0.1px #121212">444555666</div>
<div class="abs" style="left:628.00px;top:349px;font-size:15.35px;line-height:17px;color:#121212;white-space:nowrap;-webkit-text-stroke:0.1px #121212">95</div>
<div class="abs" style="left:718.60px;top:349px;font-size:15.35px;line-height:17px;color:#121212;white-space:nowrap;-webkit-text-stroke:0.1px #121212">85</div>
<div class="abs" style="left:807.50px;top:349px;font-size:15.35px;line-height:17px;color:#121212;white-space:nowrap;-webkit-text-stroke:0.1px #121212">18</div>
<div class="abs" style="left:47.80px;top:371px;font-size:15.35px;line-height:17px;color:#121212;white-space:nowrap;-webkit-text-stroke:0.1px #121212">Altın Metal Tükenmez Kalem</div>
<div class="abs" style="left:305.60px;top:371px;font-size:15.35px;line-height:17px;color:#121212;white-space:nowrap;-webkit-text-stroke:0.1px #121212">35117</div>
<div class="abs" style="left:467.20px;top:371px;font-size:15.35px;line-height:17px;color:#121212;white-space:nowrap;-webkit-text-stroke:0.1px #121212">555666777</div>
<div class="abs" style="left:628.00px;top:371px;font-size:15.35px;line-height:17px;color:#121212;white-space:nowrap;-webkit-text-stroke:0.1px #121212">110</div>
<div class="abs" style="left:718.60px;top:371px;font-size:15.35px;line-height:17px;color:#121212;white-space:nowrap;-webkit-text-stroke:0.1px #121212">100</div>
<div class="abs" style="left:807.50px;top:371px;font-size:15.35px;line-height:17px;color:#121212;white-space:nowrap;-webkit-text-stroke:0.1px #121212">18</div>
<div class="abs" style="left:47.80px;top:393px;font-size:15.35px;line-height:17px;color:#121212;white-space:nowrap;-webkit-text-stroke:0.1px #121212">Altın Metal Tükenmez Kalem 0.7 mm</div>
<div class="abs" style="left:305.60px;top:393px;font-size:15.35px;line-height:17px;color:#121212;white-space:nowrap;-webkit-text-stroke:0.1px #121212">35118</div>
<div class="abs" style="left:467.20px;top:393px;font-size:15.35px;line-height:17px;color:#121212;white-space:nowrap;-webkit-text-stroke:0.1px #121212">666777888</div>
<div class="abs" style="left:628.00px;top:393px;font-size:15.35px;line-height:17px;color:#121212;white-space:nowrap;-webkit-text-stroke:0.1px #121212">110</div>
<div class="abs" style="left:718.60px;top:393px;font-size:15.35px;line-height:17px;color:#121212;white-space:nowrap;-webkit-text-stroke:0.1px #121212">100</div>
<div class="abs" style="left:807.50px;top:393px;font-size:15.35px;line-height:17px;color:#121212;white-space:nowrap;-webkit-text-stroke:0.1px #121212">18</div>
<div class="abs" style="left:47.80px;top:415px;font-size:15.35px;line-height:17px;color:#121212;white-space:nowrap;-webkit-text-stroke:0.1px #121212">Kırmızı Tükenmez Kalem 1.0 mm</div>
<div class="abs" style="left:305.60px;top:415px;font-size:15.35px;line-height:17px;color:#121212;white-space:nowrap;-webkit-text-stroke:0.1px #121212">35119</div>
<div class="abs" style="left:467.20px;top:415px;font-size:15.35px;line-height:17px;color:#121212;white-space:nowrap;-webkit-text-stroke:0.1px #121212">777888999</div>
<div class="abs" style="left:628.00px;top:415px;font-size:15.35px;line-height:17px;color:#121212;white-space:nowrap;-webkit-text-stroke:0.1px #121212">95</div>
<div class="abs" style="left:718.60px;top:415px;font-size:15.35px;line-height:17px;color:#121212;white-space:nowrap;-webkit-text-stroke:0.1px #121212">85</div>
<div class="abs" style="left:807.50px;top:415px;font-size:15.35px;line-height:17px;color:#121212;white-space:nowrap;-webkit-text-stroke:0.1px #121212">18</div>
<div class="abs" style="left:47.80px;top:437px;font-size:15.35px;line-height:17px;color:#121212;white-space:nowrap;-webkit-text-stroke:0.1px #121212">Kırmızı Metal Tükenmez Kalem</div>
<div class="abs" style="left:305.60px;top:437px;font-size:15.35px;line-height:17px;color:#121212;white-space:nowrap;-webkit-text-stroke:0.1px #121212">35120</div>
<div class="abs" style="left:467.20px;top:437px;font-size:15.35px;line-height:17px;color:#121212;white-space:nowrap;-webkit-text-stroke:0.1px #121212">889000110</div>
<div class="abs" style="left:628.00px;top:437px;font-size:15.35px;line-height:17px;color:#121212;white-space:nowrap;-webkit-text-stroke:0.1px #121212">95</div>
<div class="abs" style="left:718.60px;top:437px;font-size:15.35px;line-height:17px;color:#121212;white-space:nowrap;-webkit-text-stroke:0.1px #121212">85</div>
<div class="abs" style="left:807.50px;top:437px;font-size:15.35px;line-height:17px;color:#121212;white-space:nowrap;-webkit-text-stroke:0.1px #121212">18</div>
<div class="abs" style="left:47.80px;top:460px;font-size:15.35px;line-height:17px;color:#121212;white-space:nowrap;-webkit-text-stroke:0.1px #121212;width:254.7px;overflow:hidden">Pembe Şeffaf Tükenmez Kalem 1.0 mm</div>
<div class="abs" style="left:305.60px;top:460px;font-size:15.35px;line-height:17px;color:#121212;white-space:nowrap;-webkit-text-stroke:0.1px #121212">35121</div>
<div class="abs" style="left:467.20px;top:460px;font-size:15.35px;line-height:17px;color:#121212;white-space:nowrap;-webkit-text-stroke:0.1px #121212">1000111221</div>
<div class="abs" style="left:628.00px;top:460px;font-size:15.35px;line-height:17px;color:#121212;white-space:nowrap;-webkit-text-stroke:0.1px #121212">85</div>
<div class="abs" style="left:718.60px;top:460px;font-size:15.35px;line-height:17px;color:#121212;white-space:nowrap;-webkit-text-stroke:0.1px #121212">75</div>
<div class="abs" style="left:807.50px;top:460px;font-size:15.35px;line-height:17px;color:#121212;white-space:nowrap;-webkit-text-stroke:0.1px #121212">18</div>
<div class="abs" style="left:47.80px;top:482px;font-size:15.35px;line-height:17px;color:#121212;white-space:nowrap;-webkit-text-stroke:0.1px #121212">Pembe Şeffaf Tükenmez Kalem</div>
<div class="abs" style="left:305.60px;top:482px;font-size:15.35px;line-height:17px;color:#121212;white-space:nowrap;-webkit-text-stroke:0.1px #121212">35122</div>
<div class="abs" style="left:467.20px;top:482px;font-size:15.35px;line-height:17px;color:#121212;white-space:nowrap;-webkit-text-stroke:0.1px #121212">1111222332</div>
<div class="abs" style="left:628.00px;top:482px;font-size:15.35px;line-height:17px;color:#121212;white-space:nowrap;-webkit-text-stroke:0.1px #121212">85</div>
<div class="abs" style="left:718.60px;top:482px;font-size:15.35px;line-height:17px;color:#121212;white-space:nowrap;-webkit-text-stroke:0.1px #121212">75</div>
<div class="abs" style="left:807.50px;top:482px;font-size:15.35px;line-height:17px;color:#121212;white-space:nowrap;-webkit-text-stroke:0.1px #121212">18</div>
<div class="abs" style="left:47.80px;top:504px;font-size:15.35px;line-height:17px;color:#121212;white-space:nowrap;-webkit-text-stroke:0.1px #121212">Mor Şeffaf Tükenmez Kalem 1.0 mm</div>
<div class="abs" style="left:305.60px;top:504px;font-size:15.35px;line-height:17px;color:#121212;white-space:nowrap;-webkit-text-stroke:0.1px #121212">35123</div>
<div class="abs" style="left:467.20px;top:504px;font-size:15.35px;line-height:17px;color:#121212;white-space:nowrap;-webkit-text-stroke:0.1px #121212">1222333443</div>
<div class="abs" style="left:628.00px;top:504px;font-size:15.35px;line-height:17px;color:#121212;white-space:nowrap;-webkit-text-stroke:0.1px #121212">95</div>
<div class="abs" style="left:718.60px;top:504px;font-size:15.35px;line-height:17px;color:#121212;white-space:nowrap;-webkit-text-stroke:0.1px #121212">85</div>
<div class="abs" style="left:807.50px;top:504px;font-size:15.35px;line-height:17px;color:#121212;white-space:nowrap;-webkit-text-stroke:0.1px #121212">18</div>
<div class="abs" style="left:47.80px;top:526px;font-size:15.35px;line-height:17px;color:#121212;white-space:nowrap;-webkit-text-stroke:0.1px #121212">Mor Metal Tükenmez Kalem 1.0 mm</div>
<div class="abs" style="left:305.60px;top:526px;font-size:15.35px;line-height:17px;color:#121212;white-space:nowrap;-webkit-text-stroke:0.1px #121212">35124</div>
<div class="abs" style="left:467.20px;top:526px;font-size:15.35px;line-height:17px;color:#121212;white-space:nowrap;-webkit-text-stroke:0.1px #121212">1113444554</div>
<div class="abs" style="left:628.00px;top:526px;font-size:15.35px;line-height:17px;color:#121212;white-space:nowrap;-webkit-text-stroke:0.1px #121212">95</div>
<div class="abs" style="left:718.60px;top:526px;font-size:15.35px;line-height:17px;color:#121212;white-space:nowrap;-webkit-text-stroke:0.1px #121212">85</div>
<div class="abs" style="left:807.50px;top:526px;font-size:15.35px;line-height:17px;color:#121212;white-space:nowrap;-webkit-text-stroke:0.1px #121212">18</div>
<div class="abs" style="left:43.20px;top:278.30px;width:261.40px;height:24.40px;border:2px solid #137A45"></div>
<div class="abs" style="left:301.60px;top:299.80px;width:4.5px;height:4.5px;background:#137A45;border:1px solid #fff"></div>
<!--/GRID-->
<!--BOTTOM-->
<div class="abs" style="left:0.00px;top:871.50px;width:1424px;height:24px;background:#F5F5F5"></div>
<div class="abs" style="left:0.00px;top:895.30px;width:1424px;height:1px;background:#E3E3E3"></div>
<div class="abs" style="left:0.00px;top:896.30px;width:1424px;height:16px;background:#fff"></div>
<svg class="abs" style="left:9.00px;top:879.00px" width="6" height="9" viewBox="0 0 6 9"><path d="M5 0.8L1.2 4.5L5 8.2" fill="none" stroke="#C8C8C8" stroke-width="1"/></svg>
<svg class="abs" style="left:33.00px;top:879.00px" width="6" height="9" viewBox="0 0 6 9"><path d="M1 0.8L4.8 4.5L1 8.2" fill="none" stroke="#C8C8C8" stroke-width="1"/></svg>
<svg class="abs" style="left:55.00px;top:878.50px" width="9" height="9" viewBox="0 0 9 9"><path d="M0 1H9M0 4.3H9M0 7.6H9" stroke="#616161" stroke-width="1.1"/></svg>
<div class="abs" style="left:77.50px;top:877px;font-size:10.1px;line-height:11px;color:#242424;white-space:nowrap;-webkit-text-stroke:0.25px #242424">Sheet1</div>
<div class="abs" style="left:78.00px;top:892.90px;width:31.5px;height:2px;background:#137A45;border-radius:1px"></div>
<svg class="abs" style="left:123.00px;top:878.50px" width="9" height="9" viewBox="0 0 9 9"><path d="M4.5 0V9M0 4.5H9" stroke="#424242" stroke-width="1"/></svg>
<div class="abs" style="left:23.80px;top:900px;font-size:8.1px;line-height:9px;color:#242424;white-space:nowrap;">Çalışma Kitabı İstatistikleri</div>
<svg class="abs" style="left:1184.00px;top:903.20px" width="5" height="3" viewBox="0 0 5 3"><path d="M0.5 0.5L2.5 2.5L4.5 0.5" fill="none" stroke="#616161" stroke-width="0.9"/></svg>
<div class="abs" style="left:1218.70px;top:900px;font-size:8.3px;line-height:10px;color:#242424;white-space:nowrap;">Görüşlerinizi Microsoft’a Bildirin</div>
<div class="abs" style="left:1361.20px;top:904.20px;width:8.5px;height:1px;background:#424242"></div>
<div class="abs" style="left:1378.70px;top:900px;font-size:8.6px;line-height:10px;color:#242424;white-space:nowrap;">%142</div>
<svg class="abs" style="left:1407.00px;top:900.50px" width="9" height="9" viewBox="0 0 9 9"><path d="M4.5 0V9M0 4.5H9" stroke="#424242" stroke-width="0.9"/></svg>
<!--/BOTTOM-->
<!--HDR-->
<svg class="abs" style="left:1192.50px;top:152.00px" width="12" height="12" viewBox="0 0 12 12"><path d="M1 1H11V8.2H5L2.5 10.8V8.2H1Z" fill="none" stroke="#424242" stroke-width="0.9" stroke-linejoin="round"/></svg>
<div class="abs" style="left:1207.40px;top:153px;font-size:8.55px;line-height:10px;color:#242424;white-space:nowrap;">Açıklamalar</div>
<svg class="abs" style="left:1271.30px;top:151.50px" width="12.5" height="12.5" viewBox="0 0 12.5 12.5"><path d="M1 11.5L1.6 8.6L9 1.2L11.3 3.5L3.9 10.9Z M7.8 2.4L10.1 4.7" fill="none" stroke="#424242" stroke-width="0.9" stroke-linejoin="round"/></svg>
<div class="abs" style="left:1286.60px;top:153px;font-size:8.56px;line-height:10px;color:#242424;white-space:nowrap;">Düzenleme</div>
<svg class="abs" style="left:1334.00px;top:155.50px" width="8" height="5" viewBox="0 0 8 5"><path d="M0.5 0.5L3.8 3.8L7.1 0.5" fill="none" stroke="#424242" stroke-width="0.9"/></svg>
<svg class="abs" style="left:1360.50px;top:151.50px" width="13" height="13" viewBox="0 0 13 13"><path d="M5 3.5H1V12H10.5V9" fill="none" stroke="#fff" stroke-width="0.9"/><path d="M3.5 9.5C4 6 6.5 4.5 9.5 4.5V2L12.3 5.5L9.5 8.8V6.5C7 6.5 5 7.5 3.5 9.5Z" fill="none" stroke="#fff" stroke-width="0.9" stroke-linejoin="round"/></svg>
<div class="abs" style="left:1376.60px;top:153px;font-size:8.4px;line-height:10px;color:#fff;white-space:nowrap;-webkit-text-stroke:0.2px #fff">Paylaş</div>
<svg class="abs" style="left:1404.70px;top:155.50px" width="8" height="5" viewBox="0 0 8 5"><path d="M0.5 0.5L3.8 3.8L7.1 0.5" fill="none" stroke="#fff" stroke-width="0.9"/></svg>
<!--/HDR-->

</div>
</body></html>
